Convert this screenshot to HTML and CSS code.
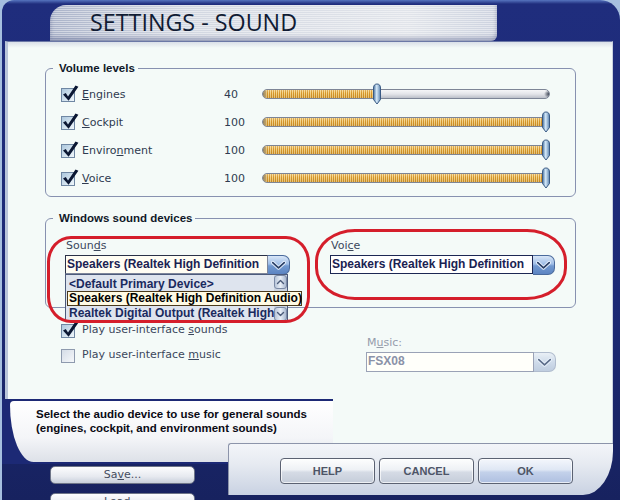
FILE: index.html
```html
<!DOCTYPE html>
<html lang="en">
<head>
<meta charset="UTF-8">
<meta name="viewport" content="width=device-width, initial-scale=1.0">
<title>Settings - Sound</title>
<link rel="stylesheet" href="styles.css">
</head>
<body>
<!-- shared shapes for checkboxes, slider thumbs and combo arrows -->
<svg class="defs" width="0" height="0" aria-hidden="true">
  <defs>
    <linearGradient id="boxFill" x1="0" y1="0" x2="1" y2="1">
      <stop offset="0" stop-color="#a9c5dc"/>
      <stop offset="1" stop-color="#f3f9fd"/>
    </linearGradient>
    <linearGradient id="boxOff" x1="0" y1="0" x2="1" y2="1">
      <stop offset="0" stop-color="#d3dbe6"/>
      <stop offset="1" stop-color="#f7f9fb"/>
    </linearGradient>
    <linearGradient id="thumbFill" x1="0" y1="0" x2="1" y2="0">
      <stop offset="0" stop-color="#46709e"/>
      <stop offset="0.45" stop-color="#d6eafa"/>
      <stop offset="1" stop-color="#5a82ae"/>
    </linearGradient>
    <symbol id="box-on" viewBox="0 0 18 18">
      <rect x="0.5" y="3.5" width="13" height="13" fill="url(#boxFill)" stroke="#6f87a3"/>
      <path d="M2 9.6 L4.8 8 L7 11.4 L14.5 0.6 L17.4 1.8 L7.6 15.8 Z" fill="#0b1733"/>
    </symbol>
    <symbol id="box-off" viewBox="0 0 18 18">
      <rect x="0.5" y="3.5" width="13" height="13" fill="url(#boxOff)" stroke="#8e9aae"/>
    </symbol>
    <symbol id="thumb" viewBox="0 0 10 22">
      <path d="M1.5 5 C1.5 2.2 3 1 5 1 C7 1 8.5 2.2 8.5 5 V16.5 L5 21 L1.5 16.5 Z" fill="url(#thumbFill)" stroke="#3a5a84"/>
    </symbol>
    <symbol id="chev" viewBox="0 0 22 19">
      <path d="M5 6.5 L11 12 L17 6.5" fill="none" stroke="#e8f2ff" stroke-width="3.6" stroke-linecap="round" stroke-linejoin="round"/>
      <path d="M5 6.5 L11 12 L17 6.5" fill="none" stroke="#2a3f66" stroke-width="1.8" stroke-linecap="round" stroke-linejoin="round"/>
    </symbol>
    <symbol id="small-up" viewBox="0 0 11 12">
      <path d="M2.5 7.5 L5.5 4.5 L8.5 7.5" fill="none" stroke="#4a5a78" stroke-width="1.4" stroke-linecap="round" stroke-linejoin="round"/>
    </symbol>
    <symbol id="small-down" viewBox="0 0 11 12">
      <path d="M2.5 4.5 L5.5 7.5 L8.5 4.5" fill="none" stroke="#4a5a78" stroke-width="1.4" stroke-linecap="round" stroke-linejoin="round"/>
    </symbol>
  </defs>
</svg>

<div class="window">
  <div class="titlebar">
    <div class="tab"><h1>SETTINGS - SOUND</h1></div>
  </div>

  <div class="panel">
    <fieldset class="group">
      <legend>Volume levels</legend>
      <div class="levels">
        <div class="vol-row">
          <svg class="box"><use href="#box-on"/></svg>
          <span class="name"><u>E</u>ngines</span>
          <span class="val">40</span>
          <div class="track"><div class="range"><div class="fill" style="width:40%"></div><svg class="thumb"><use href="#thumb"/></svg></div></div>
        </div>
        <div class="vol-row">
          <svg class="box"><use href="#box-on"/></svg>
          <span class="name"><u>C</u>ockpit</span>
          <span class="val">100</span>
          <div class="track"><div class="range"><div class="fill" style="width:100%"></div><svg class="thumb"><use href="#thumb"/></svg></div></div>
        </div>
        <div class="vol-row">
          <svg class="box"><use href="#box-on"/></svg>
          <span class="name">Enviro<u>n</u>ment</span>
          <span class="val">100</span>
          <div class="track"><div class="range"><div class="fill" style="width:100%"></div><svg class="thumb"><use href="#thumb"/></svg></div></div>
        </div>
        <div class="vol-row">
          <svg class="box"><use href="#box-on"/></svg>
          <span class="name"><u>V</u>oice</span>
          <span class="val">100</span>
          <div class="track"><div class="range"><div class="fill" style="width:100%"></div><svg class="thumb"><use href="#thumb"/></svg></div></div>
        </div>
      </div>
    </fieldset>

    <fieldset class="group devices">
      <legend>Windows sound devices</legend>
      <div class="devices-row">
        <div class="device">
          <label>Soun<u>d</u>s</label>
          <div class="select">
            <div class="value">Speakers (Realtek High Definition</div>
            <div class="arrow"><svg><use href="#chev"/></svg></div>
          </div>
          <div class="droplist">
            <ul class="items">
              <li>&lt;Default Primary Device&gt;</li>
              <li class="sel">Speakers (Realtek High Definition Audio)</li>
              <li>Realtek Digital Output (Realtek High</li>
            </ul>
            <div class="scroll">
              <span class="sbtn"><svg><use href="#small-up"/></svg></span>
              <span class="sbtn"><svg><use href="#small-down"/></svg></span>
            </div>
          </div>
        </div>
        <div class="device">
          <label>Voi<u>c</u>e</label>
          <div class="select focus">
            <div class="value">Speakers (Realtek High Definition</div>
            <div class="arrow"><svg><use href="#chev"/></svg></div>
          </div>
        </div>
      </div>
    </fieldset>

    <div class="extras">
      <div class="ui-checks">
        <div class="check-row"><svg class="box"><use href="#box-on"/></svg><span>Play user-interface <u>s</u>ounds</span></div>
        <div class="check-row"><svg class="box"><use href="#box-off"/></svg><span>Play user-interface <u>m</u>usic</span></div>
      </div>
      <div class="music">
        <label>M<u>u</u>sic:</label>
        <div class="select off">
          <div class="value">FSX08</div>
          <div class="arrow"><svg><use href="#chev"/></svg></div>
        </div>
      </div>
    </div>

    <!-- red hand-drawn highlight marks -->
    <div class="mark mark-sounds"></div>
    <div class="mark mark-voice"></div>
  </div>

  <div class="tip">
    <div class="tip-body">Select the audio device to use for general sounds<br>(engines, cockpit, and environment sounds)</div>
  </div>

  <div class="bottom">
    <div class="side">
      <button>Sa<u>v</u>e...</button>
      <button>Load...</button>
    </div>
    <div class="actions">
      <button>HELP</button>
      <button>CANCEL</button>
      <button class="ok">OK</button>
    </div>
  </div>
</div>
</body>
</html>
```

FILE: styles.css
```css
* {
  box-sizing: border-box;
}
body {
  margin: 0;
  width: 620px;
  height: 500px;
  overflow: hidden;
  background: #a6bfdf;
  font-family: "DejaVu Sans", Verdana, sans-serif;
  font-size: 11px;
  color: #34405a;
}
.defs {
  position: absolute;
}

/* window frame */
.window {
  position: relative;
  margin-left: 2px;
  width: 618px;
  height: 500px;
  border-radius: 12px 20px 0 0;
  background: linear-gradient(#5674bf, #1f2d7d 4px, #1c2975 60%, #17225f);
  overflow: hidden;
}
.titlebar {
  height: 41px;
  padding: 5px 0 0 48px;
}
.tab {
  width: 447px;
  height: 36px;
  padding-left: 40px;
  display: flex;
  align-items: center;
  border-radius: 16px 0 6px 0;
  background:
    repeating-linear-gradient(rgba(255,255,255,.45) 0 1px, transparent 1px 2px),
    linear-gradient(90deg, #aab3c9, #d2d7e1 30%, #e1e4ea 80%, #ccd2df);
  box-shadow: inset 0 -3px 4px rgba(30,40,100,.35);
}
.tab h1 {
  margin: 0;
  font: 400 23.3px/1 "Open Sans", sans-serif;
  color: #101b33;
}

/* main white panel */
.panel {
  position: relative;
  margin-left: 3px;
  width: 608px;
  height: 402px;
  padding: 19px 0 0 37px;
  background: linear-gradient(#d9dfe8, #f4faf8 6px);
  border-top: 1px solid #6b78a6;
  border-left: 3px solid #b9c5d9;
  border-right: 1px solid #c9d1df;
}
.group {
  width: 531px;
  min-width: 0;
  margin: 0;
  padding: 0;
  border: 1px solid #8791b0;
  border-radius: 6px;
}
.group legend {
  margin-left: 7px;
  padding: 0 3px 0 6px;
  font: bold 11.5px/14px "Liberation Sans", Arial, sans-serif;
  color: #101828;
}
.levels {
  padding: 5px 0 4px 15px;
}
.vol-row {
  display: grid;
  grid-template-columns: 21px 142px 38px 288px;
  align-items: center;
  height: 28px;
}
.box {
  width: 18px;
  height: 18px;
  display: block;
}
.name, .val {
  color: #2f3b50;
}

/* sliders */
.track {
  width: 288px;
  height: 10px;
  border: 1px solid #7d8596;
  border-radius: 5px;
  background:
    radial-gradient(5px 4px at 100% 50%, #363e4e, rgba(54,62,78,0)),
    linear-gradient(#f6f6f7, #e4e5e9 50%, #bcc0c9);
}
.range {
  width: 282px;
  height: 8px;
  display: flex;
  align-items: center;
}
.fill {
  flex-shrink: 0;
  height: 8px;
  border-radius: 4px 0 0 4px;
  background:
    linear-gradient(90deg, #8c7a55 0, #b8a06e 2px, rgba(0,0,0,0) 4px),
    linear-gradient(rgba(255,255,255,.25), rgba(255,255,255,0) 40%, rgba(110,60,0,.15)),
    repeating-linear-gradient(90deg, #d5962a 0 1px, #f4d48a 1px 2px);
}
.thumb {
  flex: none;
  width: 10px;
  height: 22px;
  margin-left: -4px;
}

/* sound devices */
.devices {
  margin-top: 14px;
}
.devices-row {
  display: flex;
  gap: 40px;
  padding: 14px 0 33px 19px;
}
.device {
  position: relative;
  width: 225px;
}
.device label, .music label {
  display: block;
  line-height: 14px;
  margin-bottom: 2px;
  padding-left: 1px;
  color: #3b475c;
}
.select {
  display: flex;
  height: 19px;
}
.select .value {
  flex: 1;
  padding-left: 1px;
  border: 1px solid #7e869a;
  border-top-color: #2a3148;
  border-left-color: #2a3148;
  background: #fffdf3;
  font: bold 12px/17px "Liberation Sans", Arial, sans-serif;
  color: #1a2252;
  white-space: nowrap;
  overflow: hidden;
}
.select.focus .value {
  background: #ffffff;
  border-color: #1c2754;
}
.select .arrow {
  width: 22px;
  height: 20px;
  border: 1px solid #4a6a9c;
  border-left: 0;
  border-radius: 0 7px 7px 0;
  background: linear-gradient(#d9e7f8, #9fbde6 45%, #7299d0 55%, #5c84c2);
}
.select .arrow svg {
  display: block;
  width: 21px;
  height: 19px;
}
.select.off .value {
  color: #8a92a8;
  border-color: #9aa2b6;
  background: #fffffa;
}
.select.off .arrow {
  border-color: #9aa8c0;
  background: linear-gradient(#e6edf6, #c4d2e6 50%, #aebfd8);
  opacity: .75;
}

/* open combo list */
.droplist {
  position: absolute;
  top: 35px;
  left: 0;
  width: 223px;
  height: 48px;
  display: flex;
  border: 1px solid #4d5b7b;
  background: #dee4ee;
}
.items {
  flex: 1;
  min-width: 0;
  margin: 0;
  padding: 2px 0 0;
  list-style: none;
  font: bold 12px/14px "Liberation Sans", Arial, sans-serif;
  color: #1a2a5e;
}
.items li {
  padding-left: 3px;
  white-space: nowrap;
  overflow: hidden;
}
.items .sel {
  position: relative;
  z-index: 2;
  width: 235px;
  margin-left: 1px;
  padding-left: 1px;
  line-height: 13px;
  border: 1px solid #4b3a1c;
  background: #fffbe4;
  color: #000;
  overflow: visible;
}
.scroll {
  width: 13px;
  display: flex;
  flex-direction: column;
  justify-content: space-between;
  background: #cbd4e2;
}
.sbtn {
  height: 14px;
  border: 1px solid #7b8aa6;
  border-radius: 3px;
  background: linear-gradient(90deg, #b9c6da, #e8eef6 50%, #a9b8d0);
}
.sbtn svg {
  display: block;
  width: 11px;
  height: 12px;
}

/* extra options */
.extras {
  display: flex;
  margin-top: 9px;
  padding-left: 16px;
}
.ui-checks {
  width: 305px;
}
.check-row {
  display: flex;
  align-items: center;
  gap: 3px;
  height: 25px;
  color: #3b475c;
}
.music {
  width: 190px;
  padding-top: 19px;
}
.music label {
  color: #959cab;
}
.music .select {
  height: 20px;
}

/* red highlight marks */
.mark {
  position: absolute;
  z-index: 3;
  border: 3px solid #d51e2b;
}
.mark-sounds {
  left: 39px;
  top: 194px;
  width: 263px;
  height: 87px;
  border-radius: 24px / 26px;
}
.mark-voice {
  left: 307px;
  top: 187px;
  width: 252px;
  height: 71px;
  border-radius: 40px / 32px;
}

/* help tooltip */
.tip {
  position: absolute;
  left: 0;
  top: 399px;
  z-index: 1;
  width: 331px;
  height: 65px;
  padding: 2px 0 2px 8px;
  background: #1c2975;
}
.tip-body {
  height: 100%;
  padding: 6px 0 0 26px;
  border-radius: 4px 0 0 24px / 4px 0 0 58px;
  background: linear-gradient(#ffffff, #f4f5f8 60%, #dde1e8);
  font: bold 11.5px/14px "Liberation Sans", Arial, sans-serif;
  color: #0a0a14;
}

/* bottom buttons */
.bottom {
  display: flex;
  height: 57px;
}
.side {
  width: 226px;
  padding: 23px 0 0 48px;
  display: flex;
  flex-direction: column;
  gap: 9px;
}
.side button {
  width: 145px;
  height: 18px;
  flex: none;
  padding: 0;
  border: 1px solid #6e7588;
  border-radius: 5px;
  background: linear-gradient(#fdfdfe, #e6e9ef 60%, #c8cfdb);
  font: 11px/16px "DejaVu Sans", Verdana, sans-serif;
  color: #454d60;
}
.actions {
  position: relative;
  z-index: 2;
  width: 385px;
  height: 52px;
  padding: 14px 0 0 51px;
  display: flex;
  gap: 4px;
  border-top: 1px solid #8c94aa;
  border-left: 1px solid #8c94aa;
  border-radius: 3px 0 30px 0 / 3px 0 44px 0;
  background: linear-gradient(#f3f5f9, #e6eaf1 40%, #c9d2e2);
}
.actions button {
  width: 95px;
  height: 26px;
  padding: 0;
  border: 1px solid #5b6272;
  border-radius: 4px;
  background: linear-gradient(#fdfefe, #eef1f5 45%, #d5dbe5 55%, #c4ccd9);
  box-shadow: inset 0 0 0 1px rgba(255,255,255,.7);
  font: bold 11px "Liberation Sans", Arial, sans-serif;
  color: #4d5567;
}
.actions .ok {
  background: linear-gradient(#f4f7fc, #dfe7f4 45%, #c3d1ea 55%, #aebfe0);
}
```
